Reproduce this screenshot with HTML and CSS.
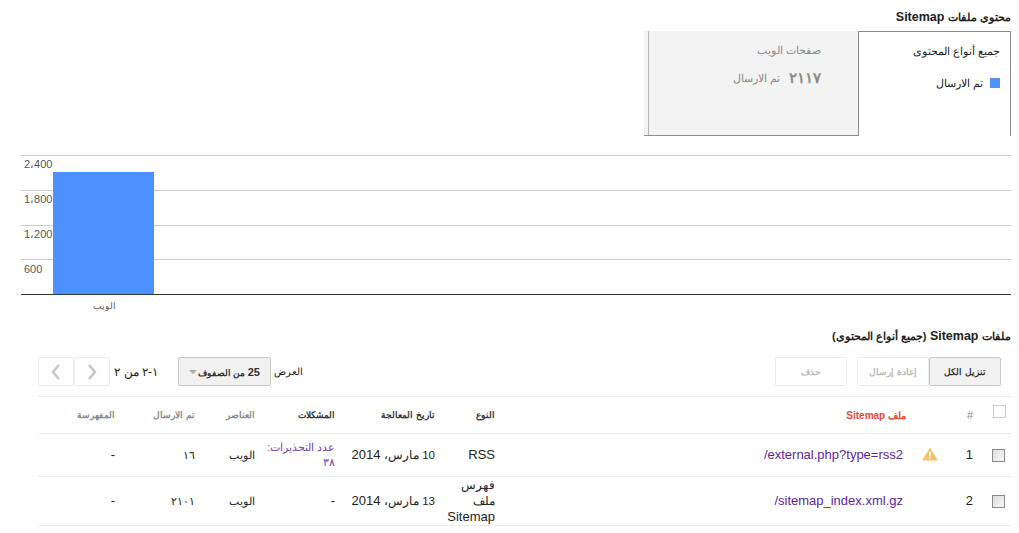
FILE: index.html
```html
<!DOCTYPE html>
<html lang="ar" dir="rtl">

<head>
    <meta charset="UTF-8">
    <meta name="viewport" content="width=device-width, initial-scale=1.0">
    <title>Sitemap</title>
    <link rel="stylesheet" href="styles.css">
</head>

<body>
    <h2 class="section-title title-top"><span class="ar">محتوى ملفات</span> Sitemap</h2>

    <div class="tabs">
        <div class="tab tab-active">
            <div class="tab-name">جميع أنواع المحتوى</div>
            <div class="tab-legend"><span class="swatch"></span>تم الارسال</div>
        </div>
        <div class="tab tab-idle">
            <div class="tab-name">صفحات الويب</div>
            <div class="tab-stat"><span class="stat-num">٢١١٧</span>تم الارسال</div>
        </div>
    </div>

    <div class="chart">
        <div class="chart-row"><span class="tick">2،400</span></div>
        <div class="chart-row"><span class="tick">1،800</span></div>
        <div class="chart-row"><span class="tick">1،200</span></div>
        <div class="chart-row"><span class="tick tick-short">600</span></div>
        <div class="bar"></div>
    </div>
    <div class="chart-label">الويب</div>

    <h2 class="section-title title-files"><span class="ar">ملفات</span> Sitemap <span class="ar">(جميع أنواع المحتوى)</span></h2>

    <div class="toolbar">
        <button class="btn btn-on">تنزيل الكل</button>
        <button class="btn btn-off btn-joined">إعادة إرسال</button>
        <button class="btn btn-off btn-delete">حذف</button>
        <span class="toolbar-gap"></span>
        <span class="show-label">العرض</span>
        <button class="select"><span><span class="select-num">25</span> من الصفوف</span><span class="caret"></span></button>
        <span class="page-info">١-٢ من ٢</span>
        <div class="pager">
            <button class="page-btn"><svg width="10" height="16" viewBox="0 0 10 16"><path d="M2 1l6 7-6 7" fill="none" stroke="#c4c4c4" stroke-width="2.4"/></svg></button>
            <button class="page-btn"><svg width="10" height="16" viewBox="0 0 10 16"><path d="M8 1L2 8l6 7" fill="none" stroke="#c4c4c4" stroke-width="2.4"/></svg></button>
        </div>
    </div>

    <table class="files">
        <colgroup>
            <col class="c-check">
            <col class="c-num">
            <col class="c-warn">
            <col class="c-file">
            <col class="c-type">
            <col class="c-date">
            <col class="c-issues">
            <col class="c-items">
            <col class="c-sent">
            <col class="c-indexed">
        </colgroup>
        <thead>
            <tr>
                <th class="cell-check"><span class="check check-head"></span></th>
                <th class="cell-num">#</th>
                <th></th>
                <th class="head-file">ملف Sitemap</th>
                <th class="head-dark">النوع</th>
                <th class="head-dark">تاريخ المعالجة</th>
                <th class="head-dark">المشكلات</th>
                <th>العناصر</th>
                <th>تم الارسال</th>
                <th>المفهرسة</th>
            </tr>
        </thead>
        <tbody>
            <tr>
                <td class="cell-check"><span class="check"></span></td>
                <td class="cell-num">1</td>
                <td class="cell-warn"><svg width="16" height="14" viewBox="0 0 16 14"><path d="M8 0.5L15.8 13.5H0.2z" fill="#f5c26b"/><path d="M7.2 4.5h1.6v5H7.2zM7.2 10.5h1.6v1.6H7.2z" fill="#fff"/></svg></td>
                <td><a class="link" dir="ltr">/external.php?type=rss2</a></td>
                <td>RSS</td>
                <td><span class="date-ar">10 مارس،</span> 2014</td>
                <td><a class="link warn-count">عدد التحذيرات: ٣٨</a></td>
                <td class="small">الويب</td>
                <td class="small digits">١٦</td>
                <td>-</td>
            </tr>
            <tr>
                <td class="cell-check"><span class="check"></span></td>
                <td class="cell-num">2</td>
                <td></td>
                <td><a class="link" dir="ltr">/sitemap_index.xml.gz</a></td>
                <td><span class="date-ar">فهرس ملف</span> Sitemap</td>
                <td><span class="date-ar">13 مارس،</span> 2014</td>
                <td>-</td>
                <td class="small">الويب</td>
                <td class="small digits">٢١٠١</td>
                <td>-</td>
            </tr>
        </tbody>
    </table>

    <div class="pager pager-bottom">
        <button class="page-btn"></button>
        <button class="page-btn"></button>
    </div>
</body>

</html>
```

FILE: styles.css
```css
* {
    box-sizing: border-box;
}

html {
    overflow: hidden;
}

body {
    margin: 0;
    padding: 0 8px 0 0;
    height: 533px;
    overflow: hidden;
    background: #fff;
    color: #222;
    font-family: "Liberation Sans", Arial, sans-serif;
    font-size: 13px;
}

.section-title {
    margin: 0;
    font-size: 12.5px;
    font-weight: bold;
    line-height: 14px;
    color: #222;
}

.section-title .ar {
    font-size: 11px;
}

.title-top {
    padding-top: 10px;
    height: 31px;
}

/* tabs */
.tabs {
    display: flex;
    height: 105px;
}

.tab {
    height: 105px;
}

.tab-active {
    width: 153px;
    border: 1px solid #8c8c8c;
    border-bottom: none;
    padding: 12px 10px 0 0;
}

.tab-idle {
    width: 214px;
    background: #f3f3f3;
    border-bottom: 1px solid #8c8c8c;
    padding: 12px 37px 0 0;
    color: #8a8a8a;
    position: relative;
}

.tab-idle::after {
    content: "";
    position: absolute;
    top: 0;
    left: 4px;
    bottom: 0;
    width: 1px;
    background: #b5b5b5;
}

.tab-name {
    font-size: 11px;
    line-height: 14px;
}

.tab-legend {
    display: flex;
    align-items: center;
    gap: 7px;
    font-size: 11px;
    line-height: 14px;
    margin-top: 18px;
}

.swatch {
    width: 10px;
    height: 10px;
    background: #4d90fe;
}

.tab-stat {
    display: flex;
    align-items: center;
    gap: 9px;
    margin-top: 12px;
    font-size: 11px;
}

.stat-num {
    font-size: 15px;
    font-weight: bold;
    letter-spacing: 3.5px;
    color: #8a8a8a;
}

/* chart */
.chart {
    position: relative;
    margin: 19px 0 0 0;
    width: 990px;
    border-bottom: 1px solid #333;
    height: 140px;
}

.chart-row {
    height: 34.75px;
    border-top: 1px solid #ccc;
    direction: ltr;
    text-align: left;
}

.tick {
    display: block;
    width: 32px;
    padding: 2px 0 0 3px;
    font-size: 11px;
    line-height: 13px;
    color: #555;
}

.tick-short {
    padding-top: 3px;
}

.bar {
    position: absolute;
    left: 32px;
    bottom: 0;
    width: 101px;
    height: 122px;
    background: #4d90fe;
}

.chart-label {
    width: 990px;
    font-size: 9px;
    line-height: 11px;
    padding: 6px 0 0 0;
    direction: ltr;
    text-indent: 72px;
    color: #555;
}

.title-files {
    padding-top: 17px;
    height: 45px;
}

/* toolbar */
.toolbar {
    display: flex;
    align-items: center;
    height: 29px;
    margin: 0 10px 0 0;
    width: 963px;
}

button {
    font-family: inherit;
    cursor: pointer;
}

.btn {
    width: 72px;
    height: 29px;
    border-radius: 2px;
    font-size: 8.5px;
    font-weight: bold;
    padding: 0;
}

.btn-on {
    background: #f1f1f1;
    border: 1px solid #c6c6c6;
    color: #333;
}

.btn-off {
    background: #fff;
    border: 1px solid #ececec;
    color: #b8b8b8;
}

.btn-delete {
    margin-right: 10px;
}

.toolbar-gap {
    flex: 1;
}

.show-label {
    font-size: 9.5px;
    margin-left: 3px;
}

.select {
    width: 93px;
    height: 29px;
    display: flex;
    align-items: center;
    justify-content: space-between;
    padding: 0 10px;
    background: #f1f1f1;
    border: 1px solid #c6c6c6;
    border-radius: 2px;
    font-size: 9px;
    font-weight: bold;
    color: #333;
    margin-left: 20px;
}

.select-num {
    font-size: 11px;
}

.caret {
    width: 0;
    height: 0;
    border: 4px solid transparent;
    border-top-color: #aaa;
    border-bottom: none;
}

.page-info {
    font-size: 12px;
    margin-left: 4px;
    width: 44px;
    white-space: nowrap;
}

.pager {
    display: flex;
    height: 29px;
}

.page-btn {
    width: 36px;
    height: 29px;
    padding: 0;
    background: #fff;
    border: 1px solid #ececec;
    border-radius: 2px;
    display: flex;
    align-items: center;
    justify-content: center;
}

/* table */
.files {
    margin: 10px 0 0 0;
    width: 973px;
    table-layout: fixed;
    border-collapse: collapse;
}

.c-check { width: 27px; }
.c-num { width: 34px; }
.c-warn { width: 35px; }
.c-file { width: 408px; }
.c-type { width: 60px; }
.c-date { width: 100px; }
.c-issues { width: 80px; }
.c-items { width: 60px; }
.c-sent { width: 80px; }
.c-indexed { width: 89px; }

.files th,
.files td {
    padding: 0 12px 0 0;
    text-align: right;
    vertical-align: middle;
    border-top: 1px solid #ebebeb;
    border-bottom: 1px solid #ebebeb;
}

.files th {
    height: 37px;
    font-size: 9px;
    font-weight: bold;
    color: #888;
}

.files td {
    height: 43px;
    font-size: 13px;
    line-height: 16px;
}

.files th.head-dark {
    color: #333;
}

.files th.head-file {
    color: #dd4b39;
    font-size: 10px;
    padding-right: 9px;
}

.files th.cell-num {
    font-size: 11px;
    font-weight: normal;
}

.files .cell-check {
    padding: 0 6px 0 0;
}

.files .cell-num {
    padding: 0 11px 0 0;
}

.files .cell-warn {
    padding: 0 12px 0 0;
    line-height: 14px;
}

.cell-warn svg {
    display: block;
    margin-top: -3px;
}

.check {
    display: block;
    width: 13px;
    height: 13px;
    border: 1px solid #8a8a8a;
    background: linear-gradient(135deg, #dcdcdc, #f8f8f8);
}

.check-head {
    border-color: #ccc;
    background: #fff;
    margin: 0 -1px 7px 0;
}

.link {
    color: #61249e;
}

.warn-count {
    font-size: 10.5px;
    line-height: 15px;
    display: block;
    padding-left: 0;
    color: #7a3fb0;
}

.date-ar {
    font-size: 11.5px;
}

.files td.small {
    font-size: 11px;
}

.files td.digits {
    letter-spacing: 1px;
}

.pager-bottom {
    width: 72px;
    margin: 11px 901px 0 0;
    height: 3px;
    overflow: hidden;
}
```
